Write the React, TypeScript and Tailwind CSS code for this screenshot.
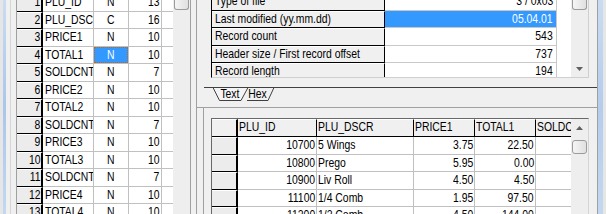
import React from "react";

type Al = "l" | "r" | "c";
function T({ children, a = "l" }: { children: React.ReactNode; a?: Al }) {
  const o = a === "l" ? "origin-left" : a === "r" ? "origin-right" : "origin-center";
  return <span className={`inline-block whitespace-nowrap scale-x-[0.8] ${o}`}>{children}</span>;
}

const leftRows: [string, string, string, string][] = [
  ["1", "PLU_ID", "N", "13"],
  ["2", "PLU_DSCR", "C", "16"],
  ["3", "PRICE1", "N", "10"],
  ["4", "TOTAL1", "N", "10"],
  ["5", "SOLDCNT1", "N", "7"],
  ["6", "PRICE2", "N", "10"],
  ["7", "TOTAL2", "N", "10"],
  ["8", "SOLDCNT2", "N", "7"],
  ["9", "PRICE3", "N", "10"],
  ["10", "TOTAL3", "N", "10"],
  ["11", "SOLDCNT3", "N", "7"],
  ["12", "PRICE4", "N", "10"],
  ["13", "TOTAL4", "N", "10"],
];

const props: [string, string][] = [
  ["Type of file", "3 / 0x03"],
  ["Last modified (yy.mm.dd)", "05.04.01"],
  ["Record count", "543"],
  ["Header size / First record offset", "737"],
  ["Record length", "194"],
];

const dataRows: [string, string, string, string][] = [
  ["10700", "5 Wings", "3.75", "22.50"],
  ["10800", "Prego", "5.95", "0.00"],
  ["10900", "Liv Roll", "4.50", "4.50"],
  ["11100", "1/4 Comb", "1.95", "97.50"],
  ["11200", "1/2 Comb", "4.50", "144.00"],
];

function UpArrow() {
  return (
    <svg width="7" height="4" viewBox="0 0 7 4">
      <polygon points="0,4 3.5,0 7,4" fill="#606060" />
    </svg>
  );
}
function DownArrow() {
  return (
    <svg width="7" height="4" viewBox="0 0 7 4">
      <polygon points="0,0 7,0 3.5,4" fill="#606060" />
    </svg>
  );
}

function LeftGrid() {
  return (
    <div className="w-[175px] h-full shrink-0 flex border-l border-r border-[#a0a0a0]">
      <div className="w-[156px] h-full overflow-hidden bg-white">
        <div className="-mt-[6px]">
          {leftRows.map(([n, name, t, len], i) => (
            <div key={n} className="flex h-[17.5px]">
              <div className="w-[26px] shrink-0 bg-[#ececec] border-t border-t-white border-b border-b-black border-r-2 border-r-black text-right pr-[1px] leading-[14px] overflow-hidden whitespace-nowrap">
                <T a="r">{n}</T>
              </div>
              <div className="w-[51px] shrink-0 border-b border-r border-[#c0c0c0] pl-[2px] leading-[16px] overflow-hidden whitespace-nowrap">
                <T>{name}</T>
              </div>
              {i === 3 ? (
                <div className="w-[35px] shrink-0 border-b border-r border-[#c0c0c0] overflow-hidden">
                  <div className="h-full bg-[#3399ff] text-white text-center border border-dotted border-[#c0661a] leading-[14px]">
                    <T a="c">{t}</T>
                  </div>
                </div>
              ) : (
                <div className="w-[35px] shrink-0 border-b border-r border-[#c0c0c0] text-center leading-[16px]">
                  <T a="c">{t}</T>
                </div>
              )}
              <div className="w-[33px] shrink-0 border-b border-r border-[#c0c0c0] text-right pr-[2px] leading-[16px]">
                <T a="r">{len}</T>
              </div>
              <div className="w-[11px] shrink-0 border-b border-[#c0c0c0]" />
            </div>
          ))}
        </div>
      </div>
      <div className="w-[17px] h-full bg-[#eeeeee] flex flex-col items-center">
        <div className="w-[15px] h-[10px] rounded-b-[3px] border border-t-0 border-[#9b9b9b] bg-gradient-to-r from-[#f5f5f5] to-[#e0e0e0]" />
      </div>
    </div>
  );
}

function PropTable() {
  return (
    <div className="h-[78px] flex border-l border-l-black border-r border-r-[#cfcfcf] border-b border-b-[#cfcfcf]">
      <div className="w-[359px] h-full overflow-hidden bg-white">
        <div className="-mt-[7px]">
          {props.map(([k, v], i) => (
            <div key={k} className="flex h-[17.5px]">
              <div className="w-[173px] shrink-0 bg-[#f0f0f0] border-t border-t-white border-b border-b-black border-r border-r-black pl-[3px] leading-[14px] overflow-hidden whitespace-nowrap">
                <T>{k}</T>
              </div>
              <div
                className={`w-[172px] shrink-0 border-b border-r border-[#c8c8c8] pr-[3px] text-right leading-[16px] ${
                  i === 1 ? "bg-[#3399ff] text-white" : ""
                }`}
              >
                <T a="r">{v}</T>
              </div>
              <div className="w-[14px] shrink-0" />
            </div>
          ))}
        </div>
      </div>
      <div className="w-[17px] h-full bg-[#eeeeee] flex flex-col items-center">
        <div className="w-[15px] h-[10px] rounded-b-[3px] border border-t-0 border-[#9b9b9b] bg-gradient-to-r from-[#f5f5f5] to-[#e0e0e0]" />
        <div className="flex-1" />
        <div className="h-[17px] w-full flex items-center justify-center">
          <DownArrow />
        </div>
      </div>
    </div>
  );
}

function Tabs() {
  return (
    <div className="relative h-[14px] w-[400px]">
      <svg className="absolute inset-0" width="400" height="14" viewBox="0 0 400 14">
        <polygon points="44,0.5 50,13.5 71,13.5 77,0.5" fill="#f0f0f0" />
        <polyline points="50,13.5 71,13.5 77,0.5" fill="none" stroke="#404040" strokeWidth="1" />
        <polygon points="16,0.5 22.5,13.5 44,13.5 51,0.5" fill="#f4f4f4" />
        <polyline points="16,0.5 22.5,13.5 44,13.5 51,0.5" fill="none" stroke="#404040" strokeWidth="1" />
        <line x1="7" y1="0.5" x2="400" y2="0.5" stroke="#404040" strokeWidth="1" />
      </svg>
      <div className="relative flex pl-[21px] leading-[14px]">
        <div className="w-[24px] text-center">
          <T a="c">Text</T>
        </div>
        <div className="w-[32px] text-center">
          <T a="c">Hex</T>
        </div>
      </div>
    </div>
  );
}

function DataGrid() {
  const hdr = "shrink-0 bg-[#f0f0f0] border-t border-t-white border-b border-b-black border-r border-r-black pl-[1px] leading-[13px] overflow-hidden whitespace-nowrap";
  const cell = "shrink-0 border-b border-r border-[#c0c0c0] leading-[16px] overflow-hidden whitespace-nowrap";
  return (
    <div className="h-full flex border-t border-t-[#696969] border-l border-l-[#696969] border-r border-r-[#d4d4d4]">
      <div className="w-[359px] h-full overflow-hidden bg-white">
        <div className="flex h-[18px]">
          <div className="w-[26px] shrink-0 bg-[#f0f0f0] border-t border-t-white border-b border-b-black border-r-2 border-r-black" />
          <div className={`w-[79px] ${hdr}`}>
            <T>PLU_ID</T>
          </div>
          <div className={`w-[97px] ${hdr}`}>
            <T>PLU_DSCR</T>
          </div>
          <div className={`w-[61px] ${hdr}`}>
            <T>PRICE1</T>
          </div>
          <div className={`w-[61px] ${hdr}`}>
            <T>TOTAL1</T>
          </div>
          <div className="w-[35px] shrink-0 bg-[#f0f0f0] border-t border-t-white border-b border-b-black pl-[1px] leading-[13px] overflow-hidden whitespace-nowrap">
            <T>SOLDCNT1</T>
          </div>
        </div>
        {dataRows.map(([id, d, p, t]) => (
          <div key={id} className="flex h-[17.5px]">
            <div className="w-[26px] shrink-0 bg-[#ececec] border-t border-t-white border-b border-b-black border-r-2 border-r-black" />
            <div className={`w-[79px] text-right pr-[1px] ${cell}`}>
              <T a="r">{id}</T>
            </div>
            <div className={`w-[97px] pl-[1px] ${cell}`}>
              <T>{d}</T>
            </div>
            <div className={`w-[61px] text-right pr-[1px] ${cell}`}>
              <T a="r">{p}</T>
            </div>
            <div className={`w-[61px] text-right pr-[1px] ${cell}`}>
              <T a="r">{t}</T>
            </div>
            <div className="w-[35px] shrink-0 border-b border-[#c0c0c0]" />
          </div>
        ))}
      </div>
      <div className="w-[17px] h-full bg-[#eeeeee] flex flex-col items-center">
        <div className="h-[17px] w-full flex items-center justify-center">
          <UpArrow />
        </div>
        <div className="mt-[4px] w-[15px] h-[14px] rounded-[3px] border border-[#9b9b9b] bg-gradient-to-r from-[#f5f5f5] to-[#e0e0e0]" />
      </div>
    </div>
  );
}

function RightPanel() {
  return (
    <div className="w-[401px] h-full shrink-0 border-l border-[#a0a0a0] flex flex-col">
      <div className="h-[107px] shrink-0 flex flex-col">
        <div className="pl-[14px] pr-[8px]">
          <PropTable />
        </div>
        <div className="h-[9px] shrink-0" />
        <Tabs />
      </div>
      <div className="flex-1 min-h-0 border-t border-[#a0a0a0] flex pl-[6px]">
        <div className="flex-1 border-l border-[#a0a0a0] pl-[7px] pr-[8px] pt-[10px]">
          <DataGrid />
        </div>
      </div>
    </div>
  );
}

export default function App() {
  return (
    <div className="w-[606px] h-[214px] overflow-hidden flex bg-[#f0f0f0] text-black text-[13px] font-['Liberation_Sans',Arial,sans-serif]">
      <div className="w-[3px] shrink-0 bg-[#e6e6e6]" />
      <div className="w-[3px] shrink-0 bg-gradient-to-b from-[#c9dcf2] via-[#aac6ea] to-[#c3d8f0]" />
      <div className="w-[4px] shrink-0" />
      <div className="w-px shrink-0 bg-[#d6d6d6]" />
      <div className="w-[5px] shrink-0" />
      <LeftGrid />
      <div className="w-[5px] shrink-0" />
      <RightPanel />
      <div className="w-px shrink-0 bg-[#a0a0a0]" />
      <div className="w-[5px] shrink-0 bg-gradient-to-b from-[#c9dcf2] via-[#b4cdec] to-[#c3d8f0]" />
      <div className="flex-1 bg-[#e6e6e6]" />
    </div>
  );
}
